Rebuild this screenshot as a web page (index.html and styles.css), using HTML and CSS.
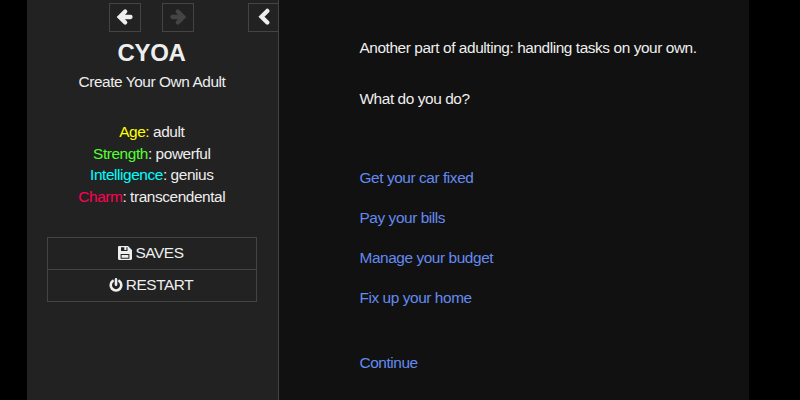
FILE: index.html
```
<!DOCTYPE html>
<html lang="en">
<head>
<meta charset="utf-8">
<title>CYOA</title>
<link rel="stylesheet" href="styles.css">
</head>
<body>
<div class="app">
  <aside class="sidebar">
    <nav class="history">
      <button class="nav-btn" aria-label="Back"><svg viewBox="0 0 18 18"><path d="M14.500 9H4M9.200 3.500L3.700 9l5.500 5.500"/></svg></button>
      <button class="nav-btn disabled" aria-label="Forward"><svg viewBox="0 0 18 18"><path d="M3.500 9H14M8.800 3.500L14.300 9l-5.500 5.500"/></svg></button>
      <button class="nav-btn toggle" aria-label="Toggle sidebar"><svg viewBox="0 0 18 18"><path d="M12.300 2.900L6.500 8.700l5.800 5.800"/></svg></button>
    </nav>
    <h1 class="title">CYOA</h1>
    <p class="subtitle">Create Your Own Adult</p>
    <ul class="stats">
      <li><span class="age">Age:</span> adult</li>
      <li><span class="strength">Strength</span>: powerful</li>
      <li><span class="intelligence">Intelligence</span>: genius</li>
      <li><span class="charm">Charm</span>: transcendental</li>
    </ul>
    <ul class="menu">
      <li><svg viewBox="0 0 14 14"><path fill-rule="evenodd" d="M1.200 0H10l4 4v8.800c0 .7-.5 1.200-1.200 1.200H1.200C.5 14 0 13.500 0 12.800V1.200C0 .5.5 0 1.200 0ZM3 1.300V5h6.500V1.300H8.400V4H6.300V1.300ZM2.600 8v4.700h8.800V8ZM3.600 9h6.800v2.700H3.600Z"/></svg><span>SAVES</span></li>
      <li><svg class="power" viewBox="0 0 14 14"><path d="M3.700 3a5.300 5.300 0 1 0 6.600 0M7 1.400v5.300"/></svg><span>RESTART</span></li>
    </ul>
  </aside>
  <main class="story">
    <p class="intro">Another part of adulting: handling tasks on your own.</p>
    <p class="question">What do you do?</p>
    <div class="choices">
      <a>Get your car fixed</a>
      <a>Pay your bills</a>
      <a>Manage your budget</a>
      <a>Fix up your home</a>
    </div>
    <a class="continue">Continue</a>
  </main>
</div>
</body>
</html>
```
FILE: styles.css
```
* { box-sizing: border-box; }
body { margin: 0; background: #000; color: #eee; font: 15.4px/22px "Liberation Sans", Arial, sans-serif; letter-spacing: -0.42px; overflow: hidden; }
p, h1, ul { margin: 0; padding: 0; }
ul { list-style: none; }
.app { display: flex; width: 722px; height: 400px; margin-left: 27px; background: #111; }
.sidebar { width: 252px; flex: none; background: #222; border-right: 1px solid #444; text-align: center; }
.history { display: flex; padding: 3px 0 0 82px; height: 32px; }
.nav-btn { width: 32px; height: 29px; padding: 0; margin-right: 21px; background: transparent; border: 1px solid #444; color: #eee; display: flex; align-items: center; justify-content: center; flex: none; }
.nav-btn svg { width: 18px; height: 18px; margin-top: -2px; fill: none; stroke: currentColor; stroke-width: 4.300; stroke-linecap: round; }
.nav-btn.disabled { color: #444; }
.toggle { width: 30px; margin: 0 0 0 auto; border-right: 0; }
.title { font-size: 24px; line-height: 30px; margin-top: 6px; padding-right: 2px; letter-spacing: -0.3px; }
.subtitle { margin-top: 3px; padding-right: 1px; }
.stats { margin-top: 28px; padding-right: 1.500px; line-height: 21.700px; }
.age { color: #ff0; }
.strength { color: #5f3; }
.intelligence { color: #0ff; }
.charm { color: #f05; }
.menu { width: 210px; margin: 29px 0 0 20px; border: 1px solid #444; }
.menu li { display: flex; height: 31px; align-items: center; justify-content: center; gap: 3px; padding-right: 2px; }
.menu li + li { height: 32px; border-top: 1px solid #444; }
.menu svg { width: 14px; height: 14px; fill: #eee; }
.menu .power { fill: none; stroke: #eee; stroke-width: 2.600; stroke-linecap: round; }
.story { padding: 37px 0 0 80.500px; display: flex; flex-direction: column; align-items: flex-start; }
.question { margin-top: 29px; }
.choices { display: flex; flex-direction: column; gap: 18px; margin-top: 57px; }
.story a { color: #648af0; }
.continue { margin-top: 43px; }
```
